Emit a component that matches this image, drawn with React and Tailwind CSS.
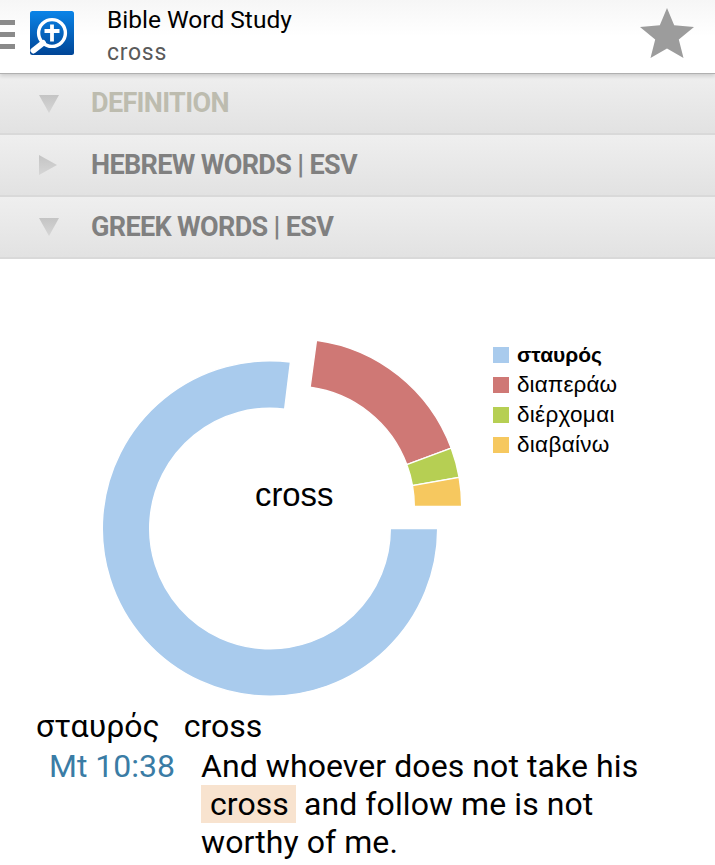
const slices = [
  { c: "#a9cbed", cx: 270, cy: 528.5, a: 90, b: 367 },
  { c: "#cf7875", cx: 294, cy: 506.5, a: 7.7, b: 69.6 },
  { c: "#b6cf53", cx: 294, cy: 506.5, a: 69.6, b: 80 },
  { c: "#f6c85f", cx: 294, cy: 506.5, a: 80, b: 90 },
];
const R = 167.7, r = 120.3;
function pt(cx, cy, rad, deg) {
  const t = (deg * Math.PI) / 180;
  return `${(cx + rad * Math.sin(t)).toFixed(2)} ${(cy - rad * Math.cos(t)).toFixed(2)}`;
}
function arc({ cx, cy, a, b }) {
  const large = b - a > 180 ? 1 : 0;
  return `M${pt(cx, cy, R, a)} A${R} ${R} 0 ${large} 1 ${pt(cx, cy, R, b)} L${pt(cx, cy, r, b)} A${r} ${r} 0 ${large} 0 ${pt(cx, cy, r, a)} Z`;
}
const legend = [
  ["σταυρός", "bg-[#a9cbed]", "font-bold text-[21px]"],
  ["διαπεράω", "bg-[#cf7875]", "text-[22.5px] tracking-[0.1px]"],
  ["διέρχομαι", "bg-[#b6cf53]", "text-[22.5px] tracking-[0.3px]"],
  ["διαβαίνω", "bg-[#f6c85f]", "text-[22.5px] tracking-[0.3px]"],
];
function Section({ label, open, dim, h }) {
  return (
    <div className={`${h} flex items-center bg-gradient-to-b from-[#efefef] to-[#e2e2e2] border-b-2 border-[#d9d9d9]`}>
      <div className="w-[91px] pl-[39px] flex items-center">
        <svg width="20" height="20" viewBox="0 0 20 20">
          <defs>
            <linearGradient id={"tri" + label.length} x1="0" y1="0" x2="0" y2="1">
              <stop offset="0" stopColor="#c4c4c4" />
              <stop offset="1" stopColor="#d6d6d6" />
            </linearGradient>
          </defs>
          <path d={open ? "M0 1H20L10 19Z" : "M0 0L18 10L0 20Z"} fill={`url(#tri${label.length})`} />
        </svg>
      </div>
      <span className={`font-['Roboto'] font-bold text-[27px] tracking-[-0.65px] ${dim ? "text-[#bdbcaf]" : "text-[#808080]"}`}>{label}</span>
    </div>
  );
}
export default function App() {
  return (
    <div className="w-[715px] h-[865px] overflow-hidden bg-white font-['Roboto',sans-serif]">
      <header className="relative z-10 h-[74px] flex items-center bg-gradient-to-b from-[#f6f6f6] via-white to-white border-b border-[#b0b0b0] shadow-[0_2px_4px_rgba(0,0,0,0.15)]">
        <div className="w-[15px] flex flex-col gap-[7px] mt-[-4px]">
          <div className="h-[5px] bg-[#8a8a8a]" />
          <div className="h-[5px] bg-[#8a8a8a]" />
          <div className="h-[5px] bg-[#8a8a8a]" />
        </div>
        <svg className="ml-[15px] mt-[-7px]" width="44" height="44" viewBox="0 0 44 44">
          <defs>
            <linearGradient id="logo" x1="0" y1="0" x2="0" y2="1">
              <stop offset="0" stopColor="#0a84e8" />
              <stop offset="1" stopColor="#004596" />
            </linearGradient>
          </defs>
          <rect width="44" height="44" rx="2.5" fill="url(#logo)" />
          <circle cx="22" cy="22" r="13.4" fill="none" stroke="#fff" strokeWidth="3.4" />
          <path d="M13 32L3.5 39.5" stroke="#fff" strokeWidth="6" strokeLinecap="round" />
          <path d="M22 13.5V30.5M14.5 20H29.5" stroke="#fff" strokeWidth="3.8" />
        </svg>
        <div className="ml-[33px] flex flex-col mt-[-2px]">
          <span className="text-[24.5px] leading-[34px] text-black">Bible Word Study</span>
          <span className="text-[23px] leading-[32px] text-[#5a5a5a] tracking-[0.7px]">cross</span>
        </div>
        <svg className="ml-auto mr-[21px] mt-[-8px]" width="54" height="50" viewBox="0 0 54 50">
          <path d="M27 0L34.2 17.3L54 19L38.8 31.6L43.5 50L27 40.5L10.5 50L15.2 31.6L0 19L19.8 17.3Z" fill="#9c9c9c" />
        </svg>
      </header>
      <Section label="DEFINITION" open dim h="h-[61px]" />
      <Section label="HEBREW WORDS | ESV" h="h-[62px]" />
      <Section label="GREEK WORDS | ESV" open h="h-[62px]" />

      <div className="relative h-[446px] flex">
        <svg className="shrink-0" width="493" height="446" viewBox="0 259 493 446">
          {slices.map((s, i) => (
            <path key={i} d={arc(s)} fill={s.c} stroke="#fff" strokeWidth="1.4" />
          ))}
        </svg>
        <span className="absolute left-[255px] top-[218px] font-['Liberation_Sans'] text-[32.8px] leading-[36px] text-black">cross</span>
        <div className="flex flex-col gap-[14px] pt-[88px]">
          {legend.map(([t, c, w]) => (
            <div key={t} className="flex items-center h-[16px]">
              <div className={`w-[16px] h-[16px] ${c}`} />
              <span className={`ml-[8px] font-['Liberation_Sans'] leading-[16px] text-black ${w}`}>{t}</span>
            </div>
          ))}
        </div>
      </div>

      <div className="text-[32px] leading-[38px] text-black">
        <div className="flex pl-[36px] h-[38px] items-center mt-[2px]">
          <span>σταυρός</span>
          <span className="ml-[24px]">cross</span>
        </div>
        <div className="flex mt-[2px]">
          <span className="w-[175px] text-right text-[#3a7ca5]">Mt 10:38</span>
          <p className="ml-[26px] w-[460px] tracking-[0.08px]">
            And whoever does not take his <span className="inline-block bg-[#f8e3cf] pl-[9px] pr-[7px]">cross</span> and follow me is not worthy of me.
          </p>
        </div>
      </div>
    </div>
  );
}
